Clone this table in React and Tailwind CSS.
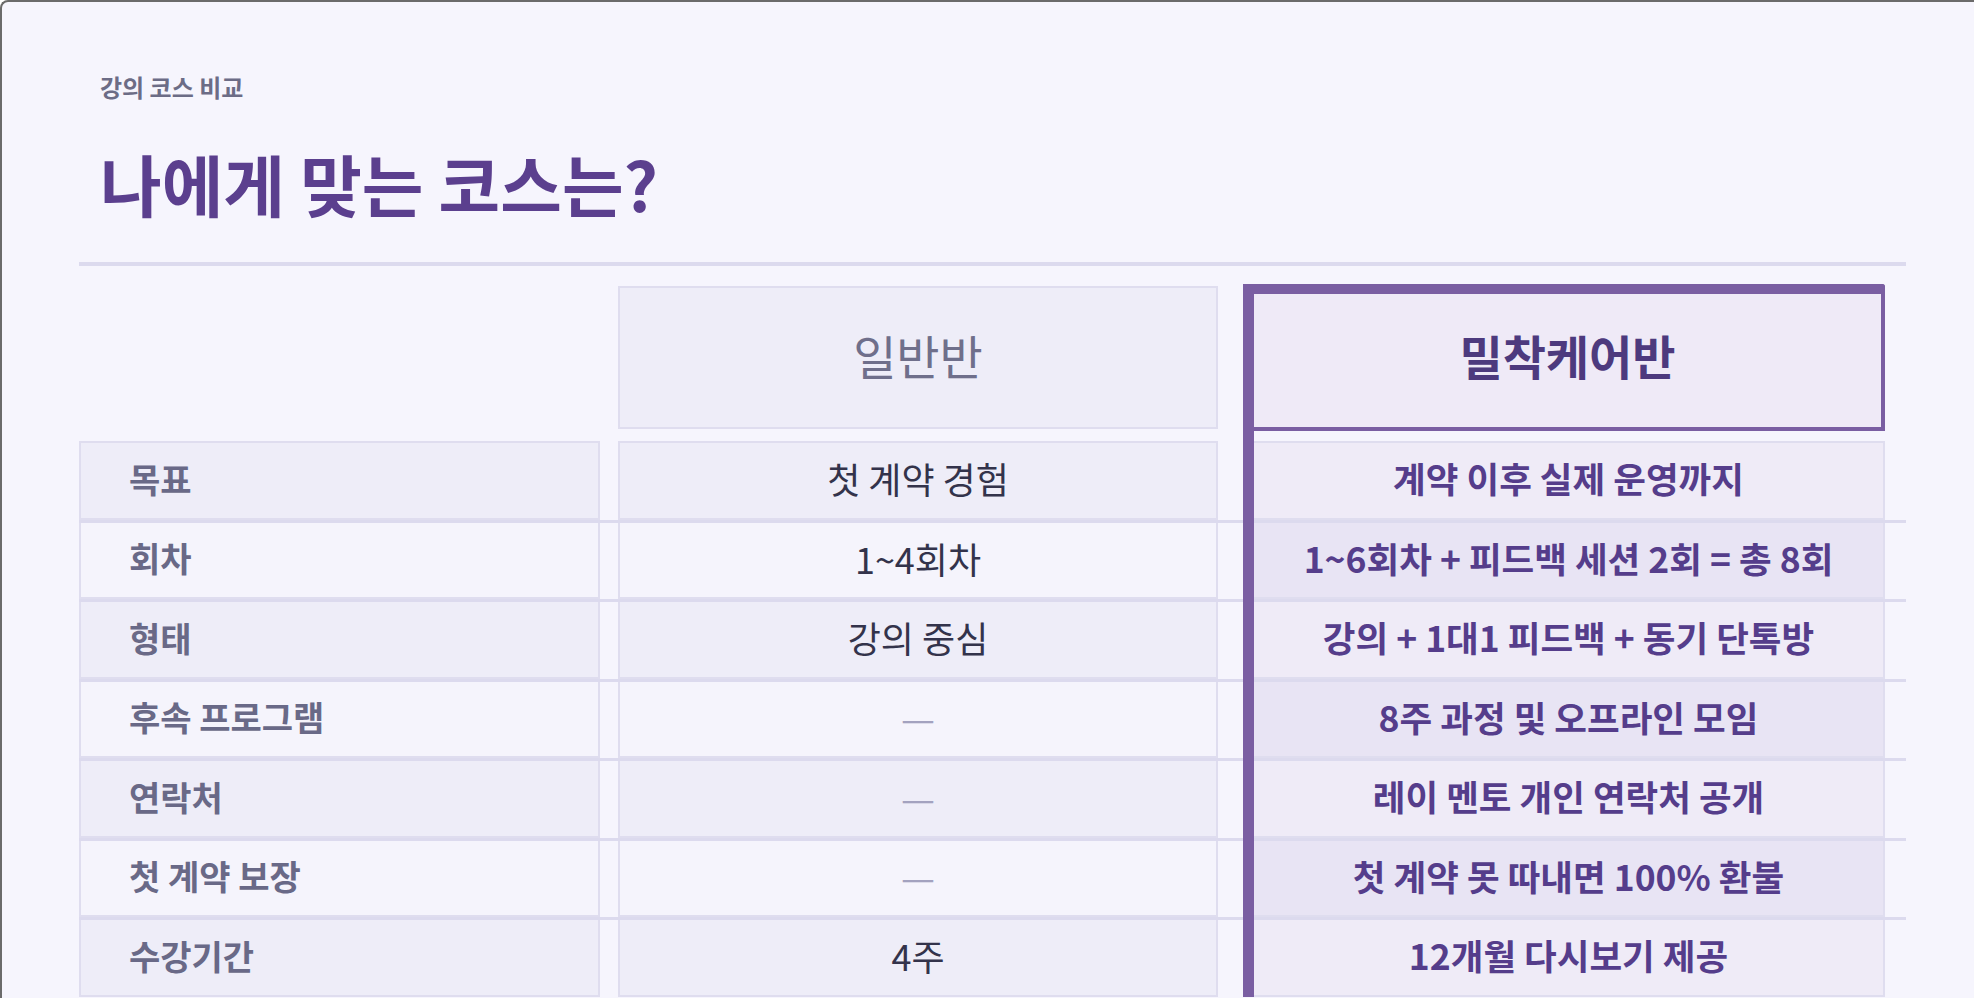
// Course comparison slide - 일반반 vs 밀착케어반
const rows = [
  { label: '목표', basic: '첫 계약 경험', care: '계약 이후 실제 운영까지' },
  { label: '회차', basic: '1~4회차', care: '1~6회차 + 피드백 세션 2회 = 총 8회' },
  { label: '형태', basic: '강의 중심', care: '강의 + 1대1 피드백 + 동기 단톡방' },
  { label: '후속 프로그램', basic: null, care: '8주 과정 및 오프라인 모임' },
  { label: '연락처', basic: null, care: '레이 멘토 개인 연락처 공개' },
  { label: '첫 계약 보장', basic: null, care: '첫 계약 못 따내면 100% 환불' },
  { label: '수강기간', basic: '4주', care: '12개월 다시보기 제공' },
];

const Row = ({ row, index }) => {
  const odd = index % 2 === 0;
  const first = index === 0;
  const cellBg = odd ? 'bg-[#eeedf8]' : 'bg-[#f5f4fc]';
  const careBg = odd ? 'bg-[#efebf7]' : 'bg-[#e8e4f4]';
  const edge = first ? 'border-2' : 'border-2 border-t-0';
  const height = first ? 'h-[79px]' : odd ? 'h-[77px]' : 'h-[76px]';

  return (
    <div className={`flex ${first ? '' : 'border-t-[3px] border-[#dcdaee]'}`}>
      <div className={`w-[521px] ${height} ${edge} border-[#dfddef] ${cellBg} flex items-center pl-[48px] pb-[5px]`}>
        <span className="text-[34px] font-bold text-[#696987]">{row.label}</span>
      </div>
      <div className={`ml-[18px] w-[600px] ${edge} border-[#dfddef] ${cellBg} flex items-center justify-center pb-[5px]`}>
        {row.basic ? (
          <span className="text-[36px] text-[#33334b]">{row.basic}</span>
        ) : (
          <span className="text-[38px] text-[#a3a2bf]">—</span>
        )}
      </div>
      <div className={`ml-[25px] w-[642px] ${edge} border-l-[11px] border-[#dfddef] border-l-[#7a5ea2] ${careBg} flex items-center justify-center pb-[5px]`}>
        <span className="text-[35.5px] font-bold text-[#553d8b]">{row.care}</span>
      </div>
    </div>
  );
};

export default function App() {
  return (
    <div className="h-[998px] overflow-hidden bg-[#f6f5fd] border-t-2 border-l-2 border-[#6b6b6b] rounded-tl-lg font-['Noto_Sans_CJK_KR','Noto_Sans',sans-serif]">
      <div className="pl-[77px] pr-[68px]">
        <div className="pl-[21px] pt-[73px]">
          <p className="text-[24px] leading-none font-semibold text-[#6c6c86]">강의 코스 비교</p>
          <h1 className="mt-[50px] text-[67px] leading-none font-bold text-[#5b3f8e]">나에게 맞는 코스는?</h1>
        </div>
        <div className="mt-[46px] h-[4px] bg-[#dcdaee]" />

        <div className="relative mt-[18px]">
          {/* header row */}
          <div className="flex items-start">
            <div className="w-[521px]" />
            <div className="ml-[18px] mt-[2px] w-[600px] h-[143px] border-2 border-[#dfddef] bg-[#eeedf8] flex items-center justify-center pb-[5px]">
              <span className="text-[47px] text-[#6f6f8b]">일반반</span>
            </div>
            <div className="ml-[25px] w-[642px] h-[157px] border-l-[11px] border-[#7a5ea2] pb-[10px]">
              <div className="h-full border-t-[10px] border-r-4 border-b-4 border-[#7a5ea2] rounded-tr-[3px] bg-[#efeaf7] flex items-center justify-center pb-[10px]">
                <span className="text-[47px] font-bold text-[#4d3a7e]">밀착케어반</span>
              </div>
            </div>
          </div>

          {rows.map((row, i) => (
            <Row key={row.label} row={row} index={i} />
          ))}

          {/* continuous accent bar for the featured column */}
          <div className="absolute left-[1164px] top-0 bottom-0 w-[11px] bg-[#7a5ea2]" />
        </div>
      </div>
    </div>
  );
}
